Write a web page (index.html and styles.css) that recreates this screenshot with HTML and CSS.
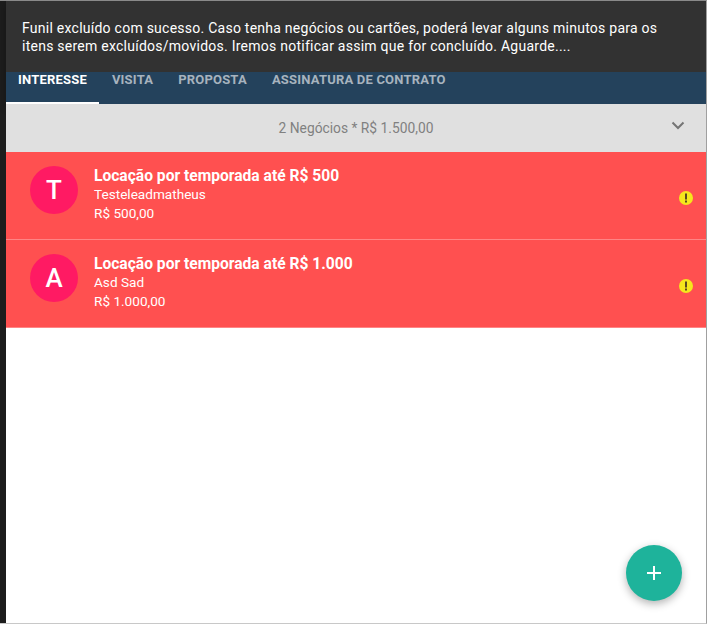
FILE: index.html
```html
<!DOCTYPE html>
<html lang="pt-BR">
<head>
    <meta charset="UTF-8">
    <meta name="viewport" content="width=device-width, initial-scale=1.0">
    <title>Funil</title>
    <link rel="stylesheet" href="styles.css">
</head>
<body>
    <div class="side-strip"></div>

    <main class="board">
        <!-- Tabs -->
        <header class="tab-header">
            <nav class="tabs">
                <a class="tab active">Interesse</a>
                <a class="tab">Visita</a>
                <a class="tab">Proposta</a>
                <a class="tab">Assinatura de contrato</a>
            </nav>
        </header>

        <!-- Summary -->
        <div class="summary">
            <span>2 Negócios * R$ 1.500,00</span>
            <svg class="chevron" width="24" height="24" viewBox="0 0 24 24">
                <path d="M6.500 8.500 12 14l5.500-5.500" fill="none" stroke="#757575" stroke-width="2"/>
            </svg>
        </div>

        <!-- Deals -->
        <div class="deal">
            <div class="avatar">T</div>
            <div class="deal-info">
                <div class="deal-title">Locação por temporada até R$ 500</div>
                <div class="deal-line">Testeleadmatheus</div>
                <div class="deal-line">R$ 500,00</div>
            </div>
            <svg class="alert" width="16" height="16" viewBox="0 0 16 16">
                <circle cx="8" cy="8" r="7" fill="#f5e71c"/>
                <rect x="7" y="3.500" width="2" height="6" fill="#5a4a20"/>
                <rect x="7" y="10.500" width="2" height="2" fill="#5a4a20"/>
            </svg>
        </div>
        <div class="deal">
            <div class="avatar">A</div>
            <div class="deal-info">
                <div class="deal-title">Locação por temporada até R$ 1.000</div>
                <div class="deal-line">Asd Sad</div>
                <div class="deal-line">R$ 1.000,00</div>
            </div>
            <svg class="alert" width="16" height="16" viewBox="0 0 16 16">
                <circle cx="8" cy="8" r="7" fill="#f5e71c"/>
                <rect x="7" y="3.500" width="2" height="6" fill="#5a4a20"/>
                <rect x="7" y="10.500" width="2" height="2" fill="#5a4a20"/>
            </svg>
        </div>

        <!-- Add button -->
        <button class="fab">
            <svg width="24" height="24" viewBox="0 0 24 24">
                <path d="M12 5v14M5 12h14" stroke="#fff" stroke-width="2" fill="none"/>
            </svg>
        </button>

        <!-- Snackbar -->
        <div class="snackbar">Funil excluído com sucesso. Caso tenha negócios ou cartões, poderá levar alguns minutos para os itens serem excluídos/movidos. Iremos notificar assim que for concluído. Aguarde....</div>
    </main>
</body>
</html>
```

FILE: styles.css
```css
html, body {
    height: 100%;
}
body {
    margin: 0;
    display: flex;
    background-color: #fff;
    font-family: Roboto, "Liberation Sans", sans-serif;
    border-top: 1px solid #8a8a8a;
    border-bottom: 1px solid #c8c8c8;
    border-right: 1px solid #a0a0a0;
    box-sizing: border-box;
    overflow: hidden;
}
.side-strip {
    width: 6px;
    background-color: #1d1d1d;
}
.board {
    position: relative;
    flex: 1;
    min-width: 0;
}
.tab-header {
    height: 103px;
    display: flex;
    align-items: flex-end;
    background-color: #24425c;
    box-shadow: 0 3px 8px rgba(0, 0, 0, 0.3);
    position: relative;
}
.tabs {
    display: flex;
}
.tab {
    height: 46px;
    padding: 0 12px;
    margin-right: 1px;
    color: #a7b3be;
    font-size: 13px;
    font-weight: 700;
    letter-spacing: 0.2px;
    line-height: 47px;
    text-transform: uppercase;
    border-bottom: 2.500px solid transparent;
}
.tab.active {
    color: #fff;
    border-bottom-color: #fff;
}
.summary {
    height: 48px;
    display: flex;
    align-items: center;
    justify-content: center;
    position: relative;
    background-color: #e0e0e0;
    color: #808080;
    font-size: 13.800px;
}
.chevron {
    position: absolute;
    right: 16px;
    top: 10px;
}
.deal {
    height: 87px;
    display: flex;
    align-items: center;
    padding: 0 12px 0 24px;
    background-color: #ff5050;
    color: #fff;
    border-bottom: 1px solid #ff8585;
}
.deal:last-of-type {
    border-bottom-color: #e8d8d8;
}
.avatar {
    width: 48px;
    height: 48px;
    border-radius: 50%;
    margin-right: 16px;
    align-self: flex-start;
    margin-top: 14px;
    display: flex;
    align-items: center;
    justify-content: center;
    background-color: #ff1a63;
    font-size: 26px;
    font-weight: 500;
}
.deal-info {
    flex: 1;
    padding-bottom: 3px;
}
.deal-title {
    font-size: 15.600px;
    font-weight: 700;
    line-height: 21px;
    margin-bottom: -2px;
}
.deal-line {
    font-size: 13.600px;
    line-height: 19px;
}
.alert {
    margin-top: 4px;
}
.fab {
    position: absolute;
    right: 24px;
    bottom: 22px;
    width: 56px;
    height: 56px;
    padding: 0;
    border: none;
    border-radius: 50%;
    display: flex;
    align-items: center;
    justify-content: center;
    background-color: #1eb39b;
    box-shadow: 0 3px 8px rgba(0, 0, 0, 0.3);
}
.snackbar {
    position: absolute;
    top: 0;
    left: 0;
    right: 0;
    height: 71px;
    box-sizing: border-box;
    padding: 18px 40px 0 16px;
    background-color: #323232;
    color: #fff;
    font-size: 14px;
    letter-spacing: 0.25px;
    line-height: 18px;
}
```
